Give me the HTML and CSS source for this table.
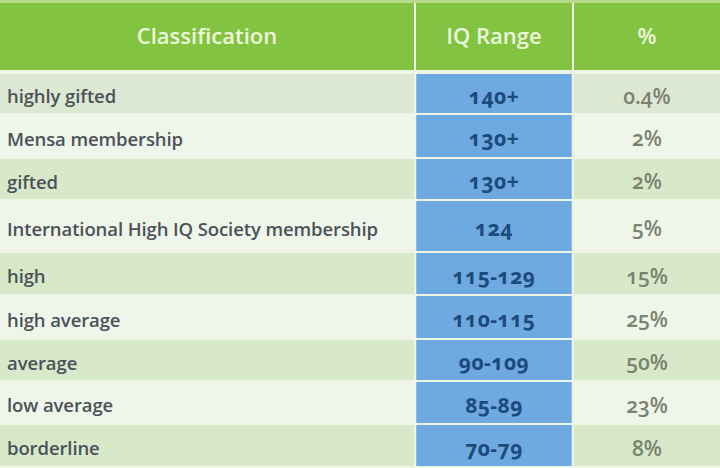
FILE: index.html
```html
<!DOCTYPE html>
<html lang="en">
<head>
<meta charset="utf-8">
<title>IQ Classification</title>
<link rel="stylesheet" href="styles.css">
</head>
<body>
<div class="table">
  <div class="cell head">Classification</div>
  <div class="cell head">IQ Range</div>
  <div class="cell head">%</div>

  <div class="cell name dark">highly gifted</div>
  <div class="cell iq">140+</div>
  <div class="cell pct dark">0.4%</div>

  <div class="cell name light">Mensa membership</div>
  <div class="cell iq">130+</div>
  <div class="cell pct light">2%</div>

  <div class="cell name green">gifted</div>
  <div class="cell iq">130+</div>
  <div class="cell pct green">2%</div>

  <div class="cell name light">International High IQ Society membership</div>
  <div class="cell iq">124</div>
  <div class="cell pct light">5%</div>

  <div class="cell name green">high</div>
  <div class="cell iq">115-129</div>
  <div class="cell pct green">15%</div>

  <div class="cell name light">high average</div>
  <div class="cell iq">110-115</div>
  <div class="cell pct light">25%</div>

  <div class="cell name green">average</div>
  <div class="cell iq">90-109</div>
  <div class="cell pct green">50%</div>

  <div class="cell name light">low average</div>
  <div class="cell iq">85-89</div>
  <div class="cell pct light">23%</div>

  <div class="cell name green">borderline</div>
  <div class="cell iq">70-79</div>
  <div class="cell pct green">8%</div>
</div>
</body>
</html>
```
FILE: styles.css
```css
html, body {
  margin: 0;
  padding: 0;
  background: #f3f7ee;
}
.table {
  width: 720px;
  height: 468px;
  box-sizing: border-box;
  border-top: 3px solid #b7da8c;
  display: grid;
  grid-template-columns: 414px 156px 1fr;
  grid-template-rows: 69px 39px 42px 40px 50px 41px 42px 40px 41px 41px;
  column-gap: 2px;
  row-gap: 2px;
  background: #eef5e6;
  font-family: "Open Sans", "Lato", sans-serif;
  overflow: hidden;
}
.cell {
  display: flex;
  align-items: center;
  justify-content: center;
  padding-top: 4px;
  box-sizing: border-box;
  white-space: nowrap;
}
.head {
  background: #82c341;
  color: #edf7dc;
  font-size: 22px;
  font-weight: 600;
  margin-bottom: 2px;
  padding-top: 0;
  padding-bottom: 4px;
}
.name {
  justify-content: flex-start;
  padding-left: 7px;
  color: #4b525a;
  font-size: 18.5px;
  font-weight: 600;
  letter-spacing: -0.1px;
}
.iq {
  background: #6eaadf;
  color: #1d4a7c;
  font-size: 21px;
  font-weight: 700;
  font-variant-numeric: oldstyle-nums;
  letter-spacing: 0.5px;
  box-shadow: inset 1px 0 0 #8cbde8, inset -1px 0 0 #8cbde8;
}
.pct {
  color: #7a8270;
  font-size: 21px;
  font-weight: 600;
  font-variant-numeric: oldstyle-nums;
}
.dark { background: #dde8d3; }
.light { background: #eff5e8; }
.green { background: #d8e9c9; }
```
